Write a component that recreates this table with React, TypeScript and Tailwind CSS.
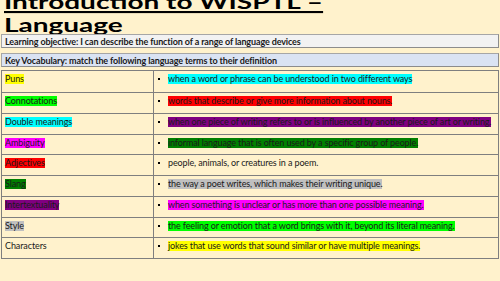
import React from "react";

const rows: { term: string; termBg: string; def: string; defBg: string; h: string }[] = [
  { term: "Puns", termBg: "bg-[#ffff00]", def: "when a word or phrase can be understood in two different ways", defBg: "bg-[#00ffff]", h: "h-[21px]" },
  { term: "Connotations", termBg: "bg-[#00ff00]", def: "words that describe or give more information about nouns.", defBg: "bg-[#ff0000]", h: "h-[21px]" },
  { term: "Double meanings", termBg: "bg-[#00ffff]", def: "when one piece of writing refers to or is influenced by another piece of art or writing.", defBg: "bg-[#800080]", h: "h-[21px]" },
  { term: "Ambiguity", termBg: "bg-[#ff00ff]", def: "informal language that is often used by a specific group of people.", defBg: "bg-[#008000]", h: "h-[20px]" },
  { term: "Adjectives", termBg: "bg-[#ff0000]", def: "people, animals, or creatures in a poem.", defBg: "", h: "h-[21px]" },
  { term: "Slang", termBg: "bg-[#008000]", def: "the way a poet writes, which makes their writing unique.", defBg: "bg-[#c0c0c0]", h: "h-[21px]" },
  { term: "Intertextuality", termBg: "bg-[#800080]", def: "when something is unclear or has more than one possible meaning.", defBg: "bg-[#ff00ff]", h: "h-[21px]" },
  { term: "Style", termBg: "bg-[#c0c0c0]", def: "the feeling or emotion that a word brings with it, beyond its literal meaning.", defBg: "bg-[#00ff00]", h: "h-[20px]" },
  { term: "Characters", termBg: "", def: "jokes that use words that sound similar or have multiple meanings.", defBg: "bg-[#ffff00]", h: "h-[21px]" },
];

export default function App() {
  return (
    <div className="w-[500px] h-[281px] overflow-hidden bg-[#fff2cc] font-['Lato',sans-serif] text-[#1a1a1a]">
      <div className="-mt-[10px] h-[44px]">
        <div className="origin-top scale-y-[0.7] pl-[4px] text-[28px] leading-[33px] font-bold underline decoration-[3px] underline-offset-[3px] text-black whitespace-nowrap">
          Introduction to WISPTL –<br />Language
        </div>
      </div>
      <div className="relative mx-[1px] h-[14px] flex items-center border border-[#a6a6a6] border-r-[#8c8c8c] border-b-[#8c8c8c] bg-[#f2f2f2] pl-[3px] text-[9px] tracking-[-0.13px] font-bold leading-none whitespace-nowrap">
        Learning objective: I can describe the function of a range of language devices
      </div>
      <div className="relative mx-[1px] mt-[5px] h-[14px] flex items-center border border-[#a6a6a6] border-r-[#8c8c8c] border-b-[#8c8c8c] bg-[#dae3f3] pl-[3px] text-[9px] tracking-[-0.13px] font-bold leading-none whitespace-nowrap">
        Key Vocabulary: match the following language terms to their definition
      </div>
      <div className="mx-[1px] mt-[3px] border border-[#7f7f7f] flex flex-col">
        {rows.map((r, i) => (
          <div key={i} className={`flex ${r.h} leading-none ${i > 0 ? "border-t border-[#7f7f7f]" : ""}`}>
            <div className="w-[152px] shrink-0 flex items-start border-r border-[#7f7f7f] pl-[3px] pt-[3px]">
              <span className={`${r.termBg} text-[9px] tracking-[-0.1px] leading-[10px] whitespace-nowrap`}>{r.term}</span>
            </div>
            <div className="flex-1 flex items-start pt-[3px] pl-[4px]">
              <span className="w-[10px] flex items-center h-[10px]">
                <span className="block w-[2px] h-[2px] bg-black"></span>
              </span>
              <span className={`${r.defBg} text-[9px] tracking-[-0.12px] leading-[10px] whitespace-nowrap`}>{r.def}</span>
            </div>
          </div>
        ))}
      </div>
    </div>
  );
}
